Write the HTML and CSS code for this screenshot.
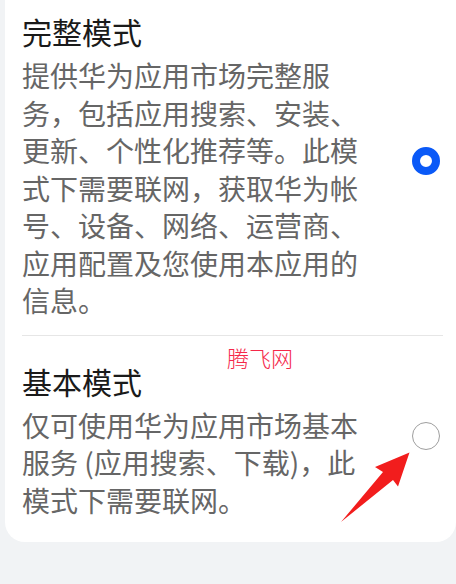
FILE: index.html
```html
<!DOCTYPE html>
<html lang="zh-CN">
<head>
    <meta charset="UTF-8">
    <meta name="viewport" content="width=device-width, initial-scale=1.0">
    <title>模式选择</title>
    <link rel="stylesheet" href="styles.css">
</head>
<body>
    <div class="page">
        <div class="card">
            <div class="option first">
                <div class="option-text">
                    <h2 class="option-title">完整模式</h2>
                    <p class="option-desc">提供华为应用市场完整服务，包括应用搜索、安装、更新、个性化推荐等。此模式下需要联网，获取华为帐号、设备、网络、运营商、应用配置及您使用本应用的信息。</p>
                </div>
                <span class="radio checked"></span>
            </div>

            <div class="divider"></div>

            <div class="option">
                <div class="option-text">
                    <h2 class="option-title">基本模式</h2>
                    <p class="option-desc">仅可使用华为应用市场基本服务 (应用搜索、下载)，此模式下需要联网。</p>
                </div>
                <span class="radio"></span>
            </div>
        </div>

        <!-- 水印和标注箭头 -->
        <span class="watermark">腾飞网</span>
        <svg class="arrow" width="456" height="584" viewBox="0 0 456 584">
            <polygon points="409.5,452.5 375,467 383,472 341,522 393,480 398,486.5" fill="#f21d1d"/>
        </svg>
    </div>
</body>
</html>
```

FILE: styles.css
```css
* {
    margin: 0;
    padding: 0;
    box-sizing: border-box;
}

body {
    font-family: "Noto Sans CJK SC", "Noto Sans", sans-serif;
    background-color: #f1f3f5;
    width: 456px;
    height: 584px;
    overflow: hidden;
}

.page {
    position: relative;
    height: 584px;
}

.card {
    background-color: #fff;
    margin: 0 0 0 5px;
    padding-bottom: 8px;
    border-radius: 0 0 20px 20px;
}

.option {
    display: flex;
    align-items: center;
    gap: 49px;
    padding: 25px 16px 15px 17px;
}

.option.first {
    padding-top: 11px;
}

.option-text {
    flex: 1;
}

.option-title {
    font-size: 30px;
    font-weight: 400;
    line-height: 40px;
    color: #1a1a1a;
    margin-bottom: 6px;
}

.option-desc {
    font-size: 28px;
    line-height: 37.5px;
    color: #666;
}

.radio {
    flex: none;
    width: 28px;
    height: 28px;
    border-radius: 50%;
    border: 1.5px solid #9e9e9e;
    background: #fff;
    margin-bottom: 8px;
}

.radio.checked {
    border: 8px solid #0a59f7;
}

.divider {
    height: 1px;
    background-color: #e6e6e6;
    margin: 0 13px 0 17px;
}

.watermark {
    position: absolute;
    left: 227px;
    top: 343px;
    font-size: 22px;
    font-weight: 300;
    line-height: 28px;
    color: #f5284a;
}

.arrow {
    position: absolute;
    left: 0;
    top: 0;
    pointer-events: none;
}
```
